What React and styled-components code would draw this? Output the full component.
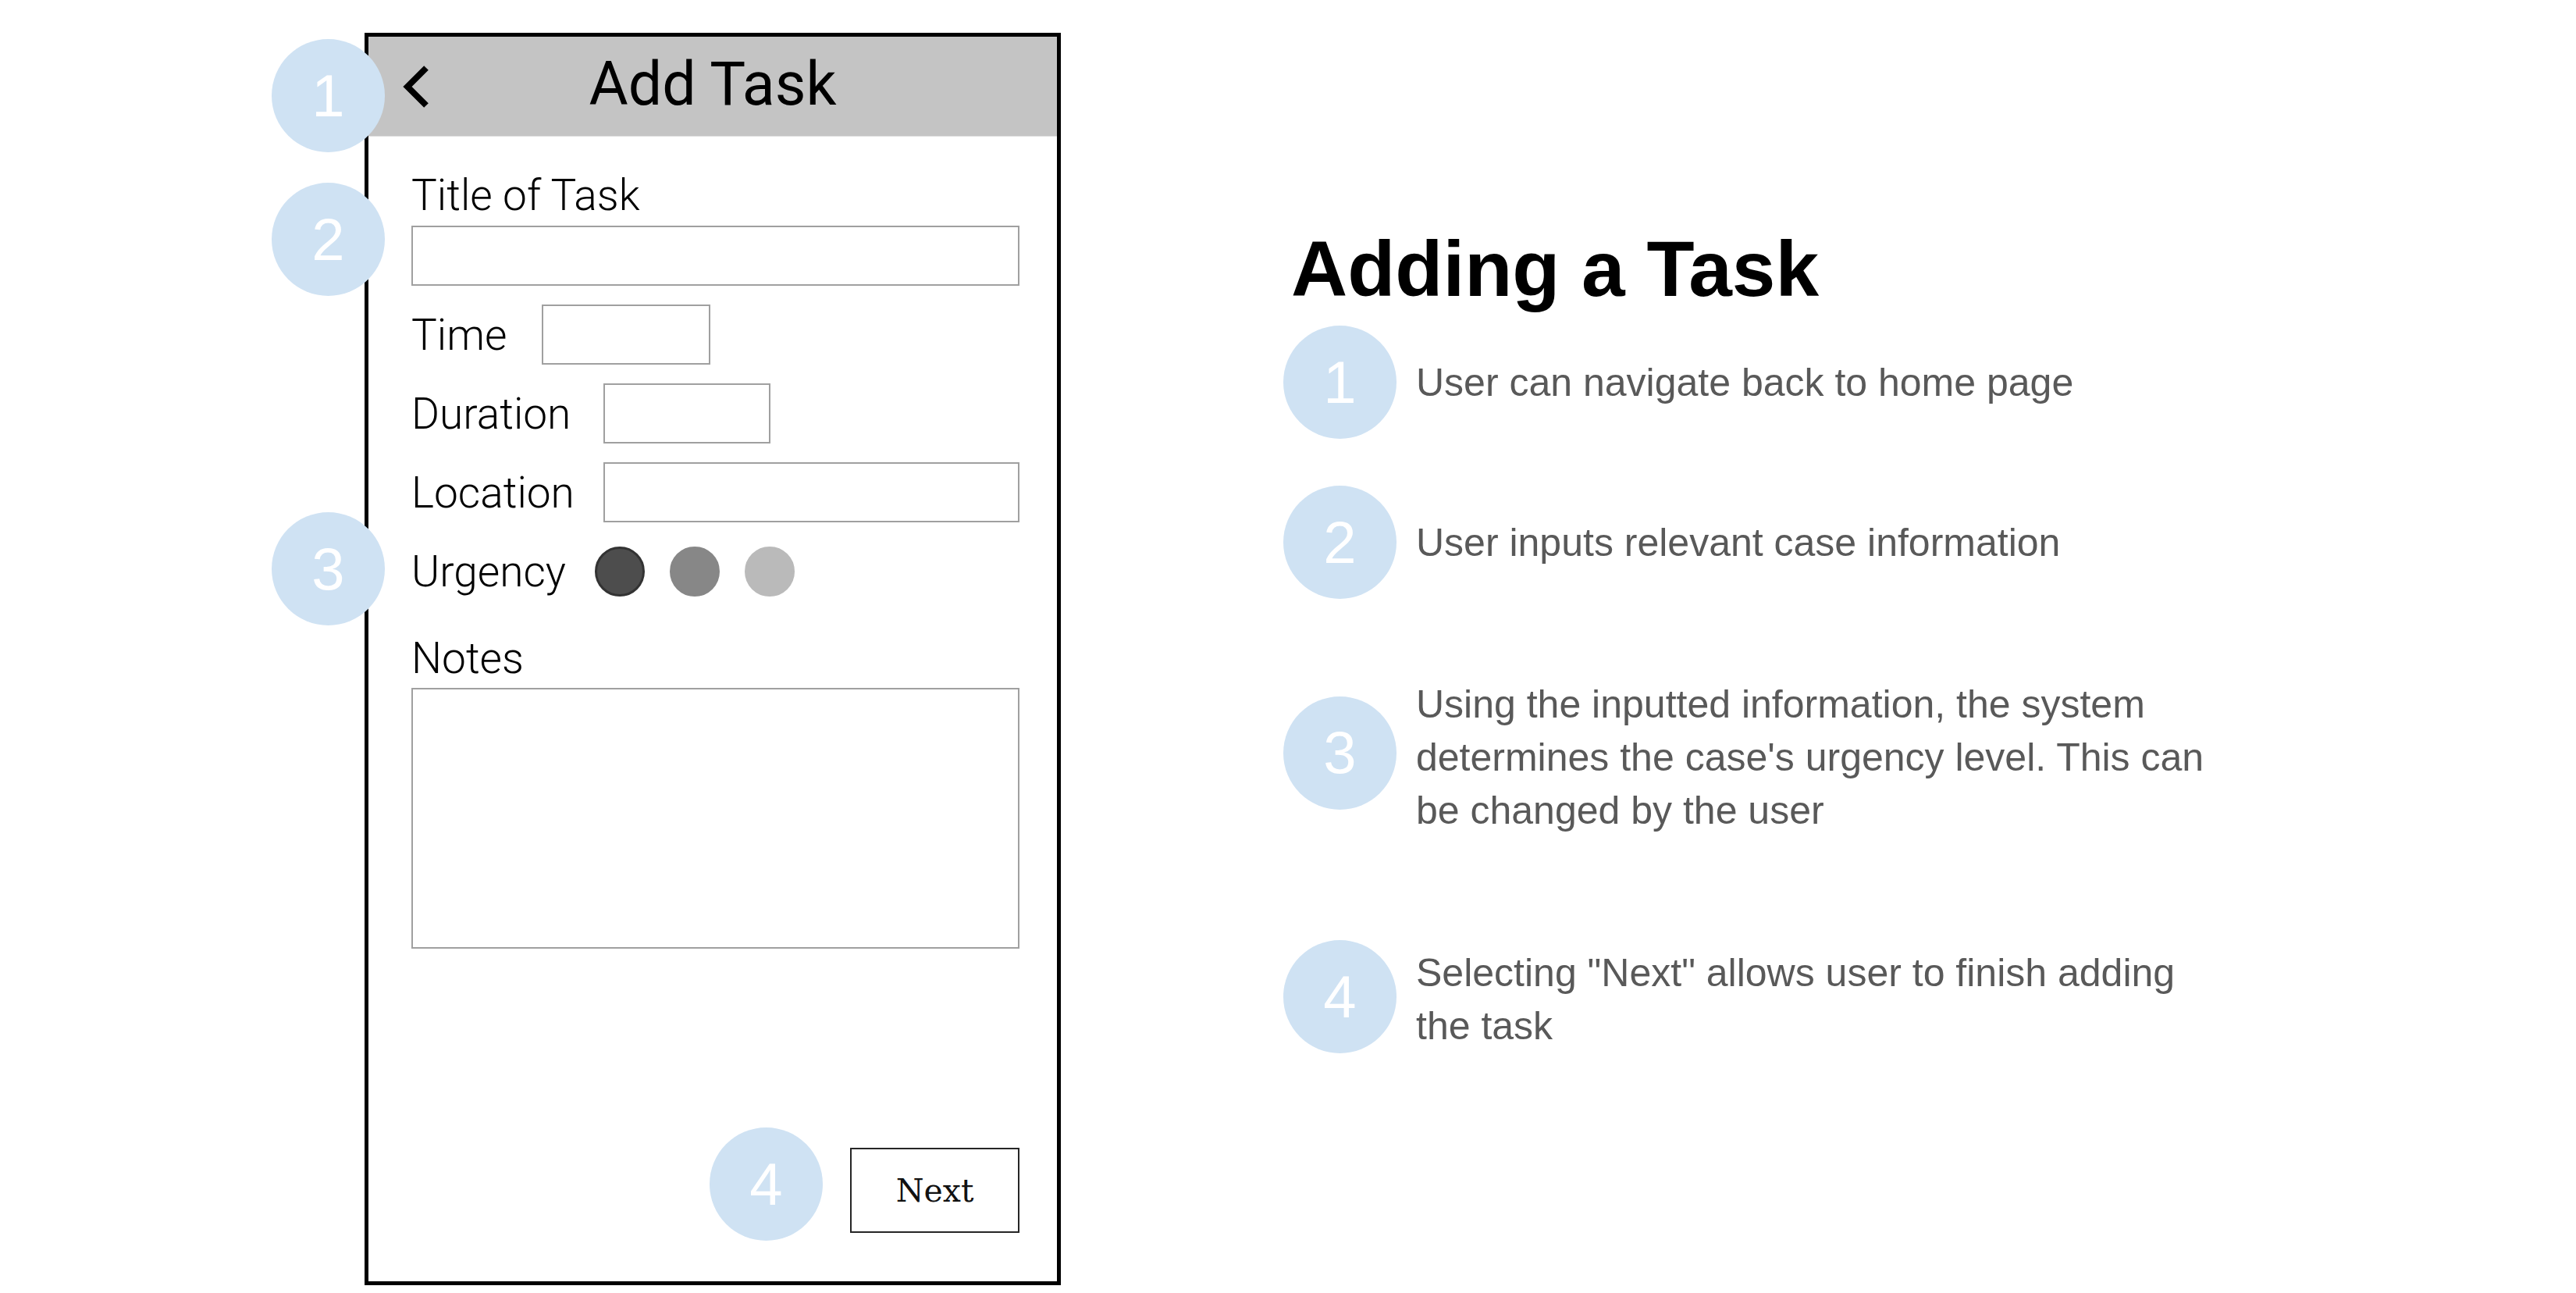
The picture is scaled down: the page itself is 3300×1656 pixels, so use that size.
import React from 'react';
import styled, { createGlobalStyle } from 'styled-components';

const GlobalStyle = createGlobalStyle`
  html, body {
    margin: 0;
    padding: 0;
    background: #fff;
  }
  body {
    font-family: 'Liberation Sans', Arial, sans-serif;
  }
`;

// gap = space above the row, lift = extra top padding that drops the text a bit
const steps = [
  { n: 1, gap: 23, lift: 0, text: 'User can navigate back to home page' },
  { n: 2, gap: 60, lift: 0, text: 'User inputs relevant case information' },
  {
    n: 3,
    gap: 89,
    lift: 12,
    text: "Using the inputted information, the system determines the case's urgency level. This can be changed by the user",
  },
  { n: 4, gap: 132, lift: 6, text: 'Selecting "Next" allows user to finish adding the task' },
];

const urgencyLevels = [
  { color: '#4d4d4d', ring: '#333' },
  { color: '#878787', ring: '#878787' },
  { color: '#bababa', ring: '#bababa' },
];

const BackIcon = () => (
  <svg width="40" height="60" viewBox="0 0 40 60">
    <polyline
      points="34,6 10,30 34,54"
      fill="none"
      stroke="#000"
      strokeWidth="8"
      strokeLinejoin="miter"
    />
  </svg>
);

const App = () => {
  return (
    <>
      <GlobalStyle />
      <Page>
        <Phone>
          <Header>
            <FloatingBadge $left={-124} $top={3}>1</FloatingBadge>
            <BackButton>
              <BackIcon />
            </BackButton>
            <ScreenTitle>Add Task</ScreenTitle>
            <span />
          </Header>

          <Form>
            <FieldGroup>
              <FloatingBadge $left={-179} $top={16}>2</FloatingBadge>
              <Label>Title of Task</Label>
              <Input type="text" />
            </FieldGroup>

            <Rows>
              <Row>
                <Label $width={167}>Time</Label>
                <Input type="text" $width={216} />
              </Row>
              <Row>
                <Label $width={246}>Duration</Label>
                <Input type="text" $width={214} />
              </Row>
              <Row>
                <Label $width={246}>Location</Label>
                <Input type="text" />
              </Row>
              <Row>
                <FloatingBadge $left={-179} $top={-37}>3</FloatingBadge>
                <Label $width={235}>Urgency</Label>
                <Dots>
                  {urgencyLevels.map((u, i) => (
                    <Dot key={i} $color={u.color} $ring={u.ring} />
                  ))}
                </Dots>
              </Row>
            </Rows>

            <NotesLabel>Notes</NotesLabel>
            <Notes />

            <Footer>
              <InlineBadge>4</InlineBadge>
              <NextButton type="button">Next</NextButton>
            </Footer>
          </Form>
        </Phone>

        <Explainer>
          <Heading>Adding a Task</Heading>
          {steps.map((s) => (
            <Step key={s.n} $gap={s.gap}>
              <Badge>{s.n}</Badge>
              <StepText $lift={s.lift}>{s.text}</StepText>
            </Step>
          ))}
        </Explainer>
      </Page>
    </>
  );
};

const Page = styled.div`
  display: flex;
  align-items: flex-start;
  width: 3300px;
  height: 1656px;
  padding: 42px 0 0 467px;
  box-sizing: border-box;
`;

const Phone = styled.div`
  position: relative;
  width: 892px;
  height: 1604px;
  border: 5px solid #000;
  box-sizing: border-box;
  display: flex;
  flex-direction: column;
  background: #fff;
  flex-shrink: 0;
`;

const Header = styled.div`
  position: relative;
  height: 128px;
  box-sizing: border-box;
  display: grid;
  grid-template-columns: 1fr auto 1fr;
  align-items: center;
  background: #c4c4c4;
  border-bottom: 1px solid #dedede;
`;

const BackButton = styled.div`
  display: flex;
  align-items: center;
  padding-left: 40px;
`;

const ScreenTitle = styled.h1`
  margin: 0 0 4px;
  font-family: Roboto, 'Liberation Sans', sans-serif;
  font-weight: 400;
  font-size: 77px;
  line-height: 1;
  color: #000;
`;

const Badge = styled.div`
  width: 145px;
  height: 145px;
  border-radius: 50%;
  background: #cfe2f3;
  color: #fff;
  display: flex;
  align-items: center;
  justify-content: center;
  font-family: 'Liberation Sans', Arial, sans-serif;
  font-size: 76px;
  line-height: 1;
  flex-shrink: 0;
`;

const FloatingBadge = styled(Badge)`
  position: absolute;
  left: ${(p) => p.$left}px;
  top: ${(p) => p.$top}px;
  z-index: 2;
`;

const InlineBadge = styled(Badge)`
  margin-bottom: -10px;
`;

const Form = styled.div`
  flex: 1;
  display: flex;
  flex-direction: column;
  padding: 43px 48px 62px 55px;
`;

const FieldGroup = styled.div`
  position: relative;
  display: flex;
  flex-direction: column;
  gap: 7px;
`;

const Label = styled.div`
  width: ${(p) => (p.$width ? `${p.$width}px` : 'auto')};
  flex-shrink: 0;
  font-family: Roboto, 'Liberation Sans', sans-serif;
  font-weight: 300;
  font-size: 55px;
  line-height: 64px;
  color: #000;
`;

const Input = styled.input`
  width: ${(p) => (p.$width ? `${p.$width}px` : '100%')};
  min-width: 0;
  height: 77px;
  box-sizing: border-box;
  border: 2px solid #a0a0a0;
  background: #fff;
  margin: 0;
  padding: 0 10px;
  outline: none;
  flex: ${(p) => (p.$width ? '0 0 auto' : '1 1 auto')};
`;

const Rows = styled.div`
  display: flex;
  flex-direction: column;
  gap: 24px;
  margin-top: 24px;
`;

const Row = styled.div`
  position: relative;
  display: flex;
  align-items: center;
  height: 77px;
`;

const Dots = styled.div`
  display: flex;
  align-items: center;
  gap: 32px;
`;

const Dot = styled.span`
  width: 64px;
  height: 64px;
  border-radius: 50%;
  box-sizing: border-box;
  background: ${(p) => p.$color};
  border: 3px solid ${(p) => p.$ring};
`;

const NotesLabel = styled(Label)`
  margin-top: 41px;
`;

const Notes = styled.textarea`
  margin-top: 6px;
  width: 100%;
  height: 334px;
  box-sizing: border-box;
  border: 2px solid #a0a0a0;
  resize: none;
  outline: none;
`;

const Footer = styled.div`
  margin-top: auto;
  display: flex;
  justify-content: flex-end;
  align-items: flex-end;
  gap: 35px;
`;

const NextButton = styled.button`
  width: 217px;
  height: 109px;
  box-sizing: border-box;
  border: 2px solid #262626;
  background: #fff;
  padding: 0;
  font-family: 'DejaVu Serif', 'Liberation Serif', serif;
  font-size: 41px;
  color: #111;
  cursor: pointer;
`;

const Explainer = styled.div`
  display: flex;
  flex-direction: column;
  margin: 252px 0 0 285px;
`;

const Heading = styled.h2`
  margin: 0 0 0 10px;
  font-family: 'Liberation Sans', Arial, sans-serif;
  font-weight: 700;
  font-size: 100px;
  line-height: 100px;
  color: #000;
`;

const Step = styled.div`
  display: flex;
  align-items: center;
  gap: 25px;
  margin-top: ${(p) => p.$gap}px;
`;

const StepText = styled.p`
  margin: 0;
  width: 1035px;
  padding-top: ${(p) => p.$lift}px;
  font-family: 'Liberation Sans', Arial, sans-serif;
  font-size: 50px;
  line-height: 68px;
  color: #595959;
`;

export default App;
